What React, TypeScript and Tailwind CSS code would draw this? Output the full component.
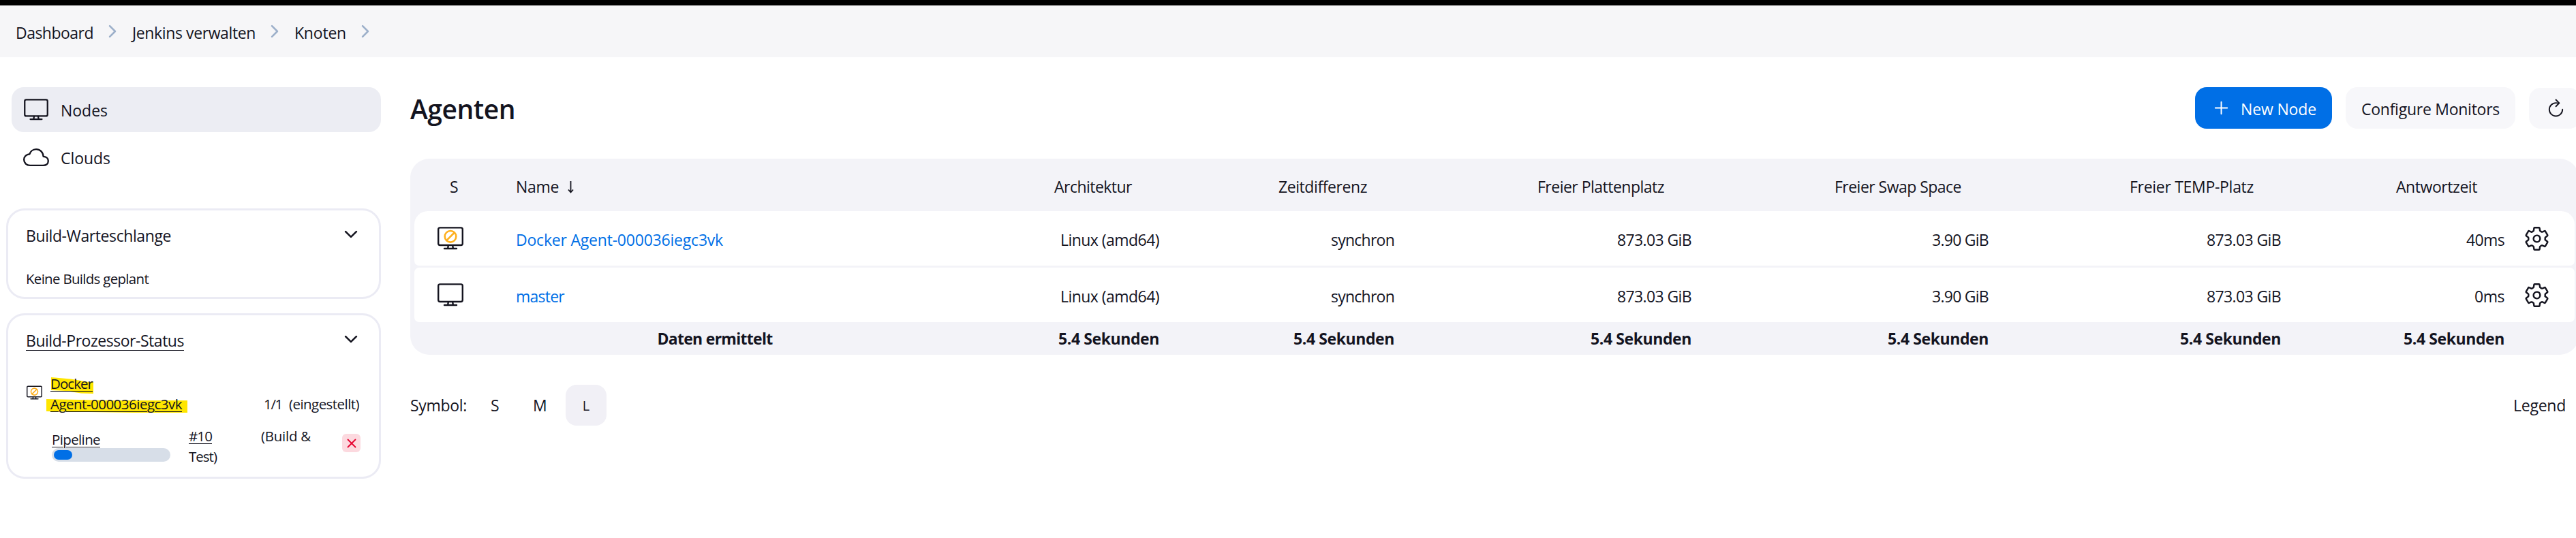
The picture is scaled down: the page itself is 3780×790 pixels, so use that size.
import { useLayoutEffect, useRef, useState } from "react";
import type { ReactNode } from "react";
import {
  IoAddOutline,
  IoChevronDownOutline,
  IoChevronForwardOutline,
  IoCloudOutline,
  IoRefreshOutline,
  IoSettingsOutline,
} from "react-icons/io5";

/** Single-line label whose tracking is adjusted so that it fills a given width. */
function Fit({ w, className = "", children }: { w: number; className?: string; children: string }) {
  const ref = useRef<HTMLSpanElement>(null);
  const [tracking, setTracking] = useState(0);
  useLayoutEffect(() => {
    const el = ref.current;
    if (!el) return;
    el.style.letterSpacing = "0px";
    const natural = el.getBoundingClientRect().width;
    const next = (w - natural) / children.length;
    el.style.letterSpacing = `${next}px`;
    setTracking(next);
  }, [w, children]);
  return (
    <span ref={ref} className={`inline-block whitespace-pre ${className}`} style={{ letterSpacing: `${tracking}px` }}>
      {children}
    </span>
  );
}

function Computer({ className, off = false }: { className: string; off?: boolean }) {
  return (
    <svg viewBox="0 0 38 34" fill="none" stroke="#14141f" className={className}>
      <rect x="1.2" y="1.4" width="35.6" height="25.6" rx="2.4" strokeWidth="2.4" />
      <path d="M15.8 27.5l-.6 4M22.2 27.5l.6 4M10 32h18" strokeWidth="2.4" strokeLinecap="round" />
      {off && (
        <g stroke="#feb01e" strokeWidth="2.6" strokeLinecap="round">
          <circle cx="19" cy="14.3" r="8.3" />
          <path d="M13.2 20.1L24.8 8.5" />
        </g>
      )}
    </svg>
  );
}

function Card({ title, titleWidth, underline, className, children }: {
  title: string;
  titleWidth: number;
  underline?: boolean;
  className: string;
  children: ReactNode;
}) {
  return (
    <section className={`rounded-[27px] border-[3px] border-[#ebebf4] ${className}`}>
      <div className="flex h-[72px] items-center justify-between pl-[26px] pr-[27px] pt-[2px]">
        <Fit w={titleWidth} className={underline ? "border-b border-[#14141f] leading-[27px] pt-px" : ""}>
          {title}
        </Fit>
        <IoChevronDownOutline className="mb-[4px] size-[28px]" />
      </div>
      {children}
    </section>
  );
}

const COLUMNS = [
  { label: "Architektur", w: 114 },
  { label: "Zeitdifferenz", w: 130 },
  { label: "Freier Plattenplatz", w: 186 },
  { label: "Freier Swap Space", w: 186 },
  { label: "Freier TEMP-Platz", w: 182 },
  { label: "Antwortzeit", w: 119 },
];

const ROWS = [
  {
    name: "Docker Agent-000036iegc3vk",
    nameWidth: 304,
    off: true,
    shape: "rounded-t-[20px] rounded-b-[7px]",
    cells: [["Linux (amd64)", 145], ["synchron", 93], ["873.03 GiB", 109], ["3.90 GiB", 83], ["873.03 GiB", 109], ["40ms", 56]] as [string, number][],
  },
  {
    name: "master",
    nameWidth: 71,
    off: false,
    shape: "rounded-[7px]",
    cells: [["Linux (amd64)", 145], ["synchron", 93], ["873.03 GiB", 109], ["3.90 GiB", 83], ["873.03 GiB", 109], ["0ms", 44]] as [string, number][],
  },
];

const GRID = "grid grid-cols-[148px_744px_203px_345px_436px_436px_429px_328px_105px] items-center";

function Crumb({ w, children }: { w: number; children: string }) {
  return (
    <span className="flex items-center">
      <Fit w={w}>{children}</Fit>
      <IoChevronForwardOutline className="ml-[14px] mr-[15px] mb-[3px] size-[28px] text-[#9db0ca]" />
    </span>
  );
}

function Sidebar() {
  return (
    <aside className="flex w-[550px] shrink-0 flex-col pt-[44px]">
      <nav className="ml-[8px] flex flex-col gap-[4px]">
        <a className="flex h-[66px] items-center rounded-[18px] bg-[#ecedf3] pl-[18px]">
          <Computer className="h-[32px] w-[36px]" />
          <Fit w={69} className="ml-[18px] pt-[1px]">Nodes</Fit>
        </a>
        <a className="flex h-[66px] items-center pl-[17px]">
          <IoCloudOutline className="size-[38px]" />
          <Fit w={73} className="ml-[17px] pt-[2px]">Clouds</Fit>
        </a>
      </nav>
      <Card title="Build-Warteschlange" titleWidth={213} className="mt-[42px] h-[133px]">
        <p className="pl-[26px] pt-[12px] text-[20.5px] leading-[32px]">
          <Fit w={180}>Keine Builds geplant</Fit>
        </p>
      </Card>
      <Card title="Build-Prozessor-Status" titleWidth={232} underline className="mt-[21px] h-[243px]">
        <div className="flex pl-[27px] pr-[29px] pt-[13px] text-[20.5px] leading-[30px]">
          <Computer off className="mt-[18px] h-[21.5px] w-[23px] shrink-0" />
          <div className="relative ml-[12px] flex flex-1 flex-col items-start">
            <svg viewBox="0 0 208 52" className="absolute -left-[6px] top-[6px] h-[52px] w-[208px]" fill="#ffe600">
              <path d="M7 0L36 2.5 62 7h7v17l-18-.5L28 20 7 19z" />
              <path d="M0 32l95 2h112v18h-78L62 51 0 50z" />
            </svg>
            <Fit w={62} className="relative h-[30px] underline decoration-1 underline-offset-[3px]">Docker</Fit>
            <Fit w={193} className="relative h-[30px] underline decoration-1 underline-offset-[3px]">Agent-000036iegc3vk</Fit>
          </div>
          <div className="flex items-end gap-[10px]">
            <Fit w={27}>1/1</Fit>
            <Fit w={103}>(eingestellt)</Fit>
          </div>
        </div>
        <div className="flex pl-[64px] pr-[27px] pt-[17px] text-[20.5px] leading-[30px]">
          <div className="w-[174px] pt-[5px]">
            <Fit w={71} className="block! w-max underline decoration-1 underline-offset-[3px]">Pipeline</Fit>
            <div className="-mt-[2px] h-[20px] rounded-full bg-[#d7dee8] p-[3px]">
              <div className="h-[14px] w-[27px] rounded-full bg-[#006fe6]" />
            </div>
          </div>
          <div className="ml-[27px] flex flex-1 flex-col">
            <div className="flex gap-[72px]">
              <Fit w={34} className="underline decoration-1 underline-offset-[3px]">#10</Fit>
              <Fit w={73}>{"(Build &"}</Fit>
            </div>
            <Fit w={41} className="self-start">Test)</Fit>
          </div>
          <button className="mt-[12px] flex h-[27px] w-[27px] items-center justify-center rounded-[6px] bg-[#fcd9df]">
            <svg viewBox="0 0 14 14" className="size-[14px]" stroke="#e6002e" strokeWidth="1.8" strokeLinecap="round">
              <path d="M1.5 1.5l11 11M12.5 1.5l-11 11" />
            </svg>
          </button>
        </div>
      </Card>
    </aside>
  );
}

function AgentTable() {
  return (
    <div className="mt-[44px] h-[288px] w-[3182px] rounded-[28px] bg-[#f3f3f8] px-[6px]">
      <div className={`${GRID} h-[77px] pt-[4px]`}>
        <span className="pl-[52px]">S</span>
        <span className="flex items-center pl-[1px]">
          <Fit w={63}>Name</Fit>
          <svg viewBox="0 0 9 18" className="ml-[13px] mt-[2px] h-[18px] w-[9px]" fill="none" stroke="#14141f" strokeWidth="1.8">
            <path d="M4.5 0v16.5M1 12.5l3.5 4 3.5-4" />
          </svg>
        </span>
        {COLUMNS.map((c) => (
          <Fit key={c.label} w={c.w} className="mr-[42px] justify-self-end">{c.label}</Fit>
        ))}
      </div>
      <div className="flex flex-col gap-[3px]">
        {ROWS.map((r) => (
          <div key={r.name} className={`${GRID} h-[80px] bg-white ${r.shape}`}>
            <Computer off={r.off} className="ml-[34px] h-[34px] w-[38px]" />
            <Fit w={r.nameWidth} className="ml-[1px] justify-self-start pt-[3px] text-[#006fe6]">{r.name}</Fit>
            {r.cells.map(([text, w], i) => (
              <Fit key={i} w={w} className="mr-[2px] justify-self-end pt-[3px]">{text}</Fit>
            ))}
            <IoSettingsOutline className="ml-[26px] size-[39px]" />
          </div>
        ))}
      </div>
      <div className={`${GRID} h-[48px] font-bold`}>
        <Fit w={169} className="col-span-2 ml-[-10px] justify-self-center">Daten ermittelt</Fit>
        {COLUMNS.map((c) => (
          <Fit key={c.label} w={148} className="mr-[2px] justify-self-end">5.4 Sekunden</Fit>
        ))}
      </div>
    </div>
  );
}

export default function App() {
  return (
    <div className="h-[790px] w-[3780px] overflow-hidden bg-white font-['Open_Sans','Noto_Sans',sans-serif] text-[23px] leading-[30px] text-[#14141f]">
      <div className="h-[8px] bg-black" />
      <header className="flex h-[76px] items-center bg-[#f6f6f8] pl-[23px] pt-[3px]">
        <Crumb w={114}>Dashboard</Crumb>
        <Crumb w={181}>Jenkins verwalten</Crumb>
        <Crumb w={76}>Knoten</Crumb>
      </header>
      <div className="flex pl-[9px]">
        <Sidebar />
        <main className="ml-[43px] w-[3182px] shrink-0 pt-[44px]">
          <div className="flex h-[61px] items-center justify-between">
            <h1 className="pt-[3px] text-[39px] leading-[50px] font-semibold">
              <Fit w={154}>Agenten</Fit>
            </h1>
            <div className="-mr-[3px] flex items-center gap-[20px]">
              <button className="flex h-[61px] w-[201px] items-center rounded-[17px] bg-[#006fe6] pl-[23px] text-white">
                <IoAddOutline className="size-[31px]" />
                <Fit w={111} className="ml-[13px] pt-[2px]">New Node</Fit>
              </button>
              <button className="flex h-[61px] w-[249px] items-center justify-center rounded-[17px] bg-[#f7f7fa]">
                <Fit w={203} className="pt-[2px]">Configure Monitors</Fit>
              </button>
              <button className="flex h-[60px] w-[76px] items-center rounded-[17px] bg-[#f7f7fa] pl-[24px]">
                <IoRefreshOutline className="size-[31px]" />
              </button>
            </div>
          </div>
          <AgentTable />
          <footer className="mt-[44px] flex h-[60px] items-center justify-between">
            <div className="flex items-center">
              <Fit w={83}>Symbol:</Fit>
              <span className="ml-[35px] w-[14px]">S</span>
              <span className="ml-[48px] w-[22px]">M</span>
              <span className="ml-[26px] flex h-[60px] w-[60px] items-center justify-center rounded-[16px] bg-[#f1f0f6] pt-[2px] text-[20px]">L</span>
            </div>
            <Fit w={77} className="mr-[19px]">Legend</Fit>
          </footer>
        </main>
      </div>
    </div>
  );
}
